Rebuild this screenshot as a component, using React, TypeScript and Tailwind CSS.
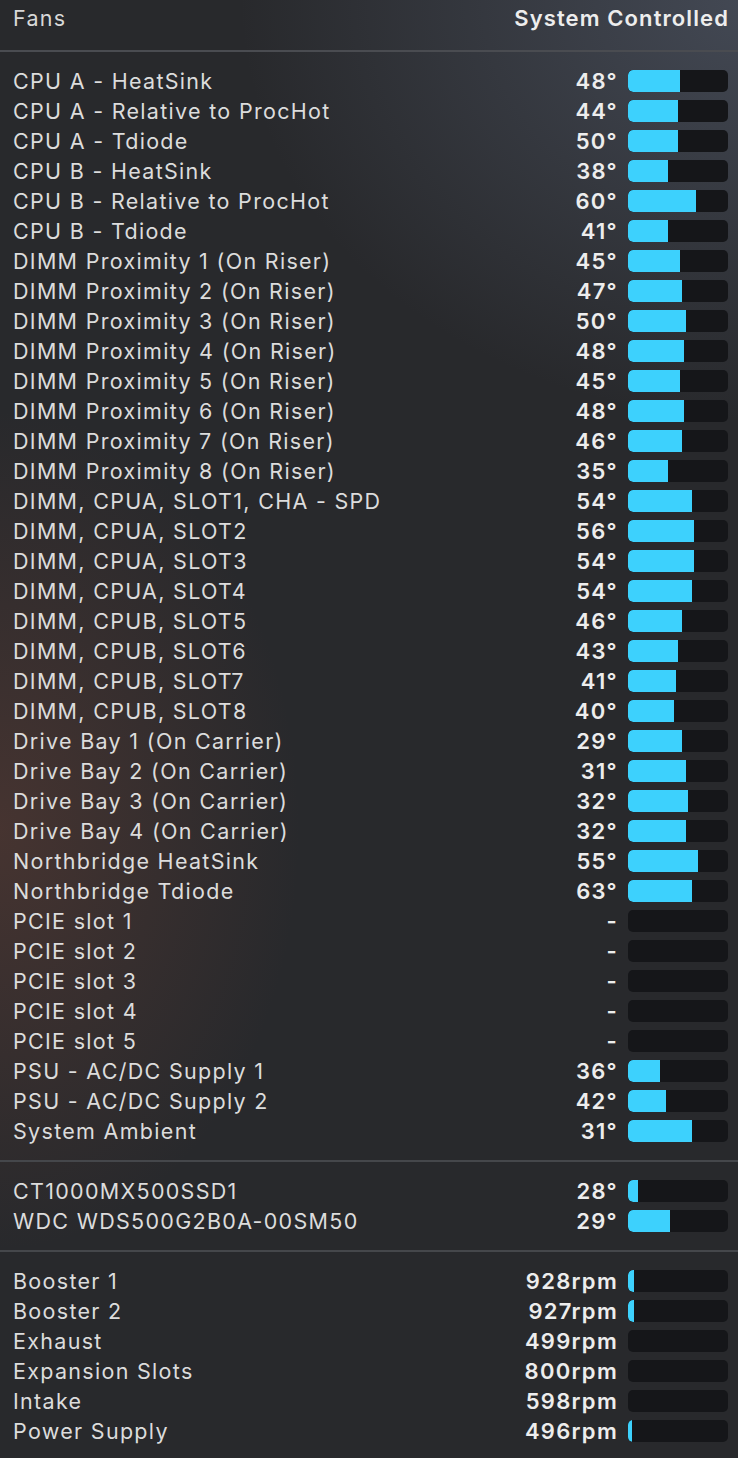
type Row = { name: string; value: string; fill: number };

const sensors: Row[] = [
  { name: "CPU A - HeatSink", value: "48°", fill: 52 },
  { name: "CPU A - Relative to ProcHot", value: "44°", fill: 50 },
  { name: "CPU A - Tdiode", value: "50°", fill: 50 },
  { name: "CPU B - HeatSink", value: "38°", fill: 40 },
  { name: "CPU B - Relative to ProcHot", value: "60°", fill: 68 },
  { name: "CPU B - Tdiode", value: "41°", fill: 40 },
  { name: "DIMM Proximity 1 (On Riser)", value: "45°", fill: 52 },
  { name: "DIMM Proximity 2 (On Riser)", value: "47°", fill: 54 },
  { name: "DIMM Proximity 3 (On Riser)", value: "50°", fill: 58 },
  { name: "DIMM Proximity 4 (On Riser)", value: "48°", fill: 56 },
  { name: "DIMM Proximity 5 (On Riser)", value: "45°", fill: 52 },
  { name: "DIMM Proximity 6 (On Riser)", value: "48°", fill: 56 },
  { name: "DIMM Proximity 7 (On Riser)", value: "46°", fill: 54 },
  { name: "DIMM Proximity 8 (On Riser)", value: "35°", fill: 40 },
  { name: "DIMM, CPUA, SLOT1, CHA - SPD", value: "54°", fill: 64 },
  { name: "DIMM, CPUA, SLOT2", value: "56°", fill: 66 },
  { name: "DIMM, CPUA, SLOT3", value: "54°", fill: 66 },
  { name: "DIMM, CPUA, SLOT4", value: "54°", fill: 64 },
  { name: "DIMM, CPUB, SLOT5", value: "46°", fill: 54 },
  { name: "DIMM, CPUB, SLOT6", value: "43°", fill: 50 },
  { name: "DIMM, CPUB, SLOT7", value: "41°", fill: 48 },
  { name: "DIMM, CPUB, SLOT8", value: "40°", fill: 46 },
  { name: "Drive Bay 1 (On Carrier)", value: "29°", fill: 54 },
  { name: "Drive Bay 2 (On Carrier)", value: "31°", fill: 58 },
  { name: "Drive Bay 3 (On Carrier)", value: "32°", fill: 60 },
  { name: "Drive Bay 4 (On Carrier)", value: "32°", fill: 58 },
  { name: "Northbridge HeatSink", value: "55°", fill: 70 },
  { name: "Northbridge Tdiode", value: "63°", fill: 64 },
  { name: "PCIE slot 1", value: "-", fill: 0 },
  { name: "PCIE slot 2", value: "-", fill: 0 },
  { name: "PCIE slot 3", value: "-", fill: 0 },
  { name: "PCIE slot 4", value: "-", fill: 0 },
  { name: "PCIE slot 5", value: "-", fill: 0 },
  { name: "PSU - AC/DC Supply 1", value: "36°", fill: 32 },
  { name: "PSU - AC/DC Supply 2", value: "42°", fill: 38 },
  { name: "System Ambient", value: "31°", fill: 64 },
];

const disks: Row[] = [
  { name: "CT1000MX500SSD1", value: "28°", fill: 10 },
  { name: "WDC WDS500G2B0A-00SM50", value: "29°", fill: 42 },
];

const fans: Row[] = [
  { name: "Booster 1", value: "928rpm", fill: 6 },
  { name: "Booster 2", value: "927rpm", fill: 6 },
  { name: "Exhaust", value: "499rpm", fill: 0 },
  { name: "Expansion Slots", value: "800rpm", fill: 0 },
  { name: "Intake", value: "598rpm", fill: 0 },
  { name: "Power Supply", value: "496rpm", fill: 4 },
];

function SensorRow({ row }: { row: Row }) {
  return (
    <div className="flex items-center h-[30px] pl-[13px] pr-[10px]">
      <span className="flex-1 pt-[1px] text-[21.5px] text-[#dcdcdc] tracking-[1.3px] whitespace-nowrap">
        {row.name}
      </span>
      <span className="pt-[1px] text-[22px] font-semibold text-[#ededed] tracking-[1.3px] mr-[-1px] text-right">
        {row.value}
      </span>
      <div className="ml-[11px] w-[100px] h-[22px] rounded-[5px] bg-[#151619] overflow-hidden">
        {row.fill > 0 && (
          <div
            className="h-full bg-[#3dd1fd] rounded-l-[5px]"
            style={{ width: row.fill }}
          />
        )}
      </div>
    </div>
  );
}

function Section({ rows }: { rows: Row[] }) {
  return (
    <div className="py-[14px]">
      {rows.map((r) => (
        <SensorRow key={r.name} row={r} />
      ))}
    </div>
  );
}

export default function App() {
  return (
    <div
      className="w-[738px] h-[1458px] overflow-hidden bg-[#28292c] bg-[radial-gradient(ellipse_300px_420px_at_0px_830px,rgba(115,68,55,0.4),transparent),radial-gradient(ellipse_520px_420px_at_760px_0px,rgba(95,105,125,0.5),transparent)]"
      style={{ fontFamily: "Inter, 'Noto Sans', sans-serif" }}
    >
      <div className="flex items-center justify-between h-[50px] pl-[13px] pr-[10px] pb-[14px]">
        <span className="text-[21.5px] text-[#d8d8d8] tracking-[1.3px]">Fans</span>
        <span className="text-[22px] font-semibold text-[#ededed] tracking-[1.1px] mr-[-1px]">
          System Controlled
        </span>
      </div>
      <div className="h-[2px] bg-[#4a4c51]" />
      <Section rows={sensors} />
      <div className="h-[2px] bg-[#45474b]" />
      <Section rows={disks} />
      <div className="h-[2px] bg-[#45474b]" />
      <Section rows={fans} />
    </div>
  );
}
